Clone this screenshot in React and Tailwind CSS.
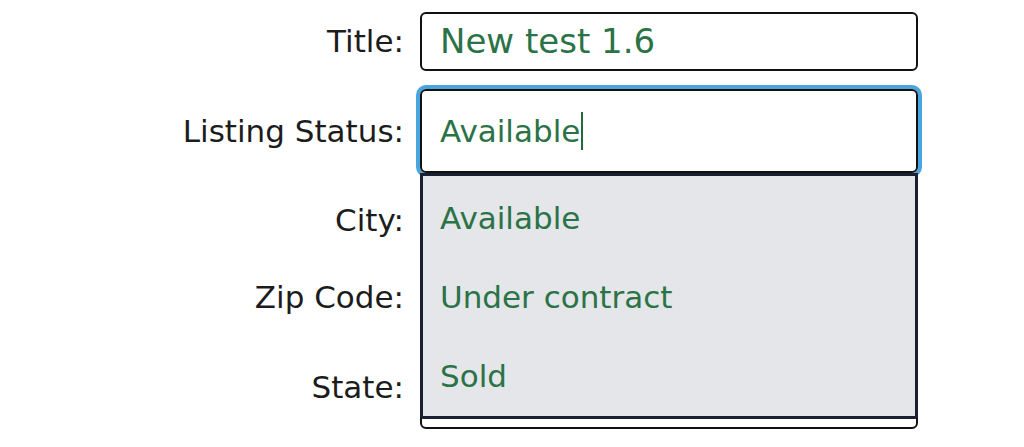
import React from "react";

const font = { fontFamily: '"DejaVu Sans", "Noto Sans", sans-serif' };

function Row({ label, height, children }) {
  return (
    <div className="flex items-center gap-[16px]" style={{ height }}>
      <label className="w-[404px] text-right text-[31px] text-[#1c1c1c]">{label}</label>
      {children}
    </div>
  );
}

export default function App() {
  const options = ["Available", "Under contract", "Sold"];

  return (
    <div className="w-[1024px] h-[447px] bg-white overflow-hidden" style={font}>
      <div className="flex flex-col gap-[18px] pt-[12px]">
        <Row label="Title:" height={59}>
          <div className="w-[498px] h-[59px] border-2 border-[#111] rounded-[6px] flex items-center pl-[18px] text-[34px] text-[#2b7346]">
            New test 1.6
          </div>
        </Row>

        <Row label="Listing Status:" height={84}>
          <div className="relative w-[498px] h-[84px]">
            <div className="w-full h-full border-2 border-[#111] rounded-[6px] ring-4 ring-[#4aa5de] flex items-center pl-[18px] text-[31px] text-[#2b7346]">
              Available
              <span className="inline-block w-[2px] h-[38px] bg-[#1f6b3c] ml-[1px]" />
            </div>
            {/* datalist dropdown */}
            <ul className="absolute left-0 top-[84px] z-10 w-[498px] border-[3px] border-[#1b2030] rounded-b-[3px] bg-[#e4e6ea] pt-[3px] text-[31px] text-[#2b7346]">
              {options.map(o => (
                <li key={o} className="h-[79px] flex items-center pl-[17px]">
                  {o}
                </li>
              ))}
            </ul>
          </div>
        </Row>

        <Row label="City:" height={59}>
          <div className="w-[498px] h-[59px] border-2 border-[#111] rounded-[6px]" />
        </Row>

        <Row label="Zip Code:" height={59}>
          <div className="w-[498px] h-[59px] border-2 border-[#111] rounded-[6px]" />
        </Row>

        <Row label="State:" height={84}>
          <div className="w-[498px] h-[84px] border-2 border-[#111] rounded-[6px]" />
        </Row>
      </div>
    </div>
  );
}
